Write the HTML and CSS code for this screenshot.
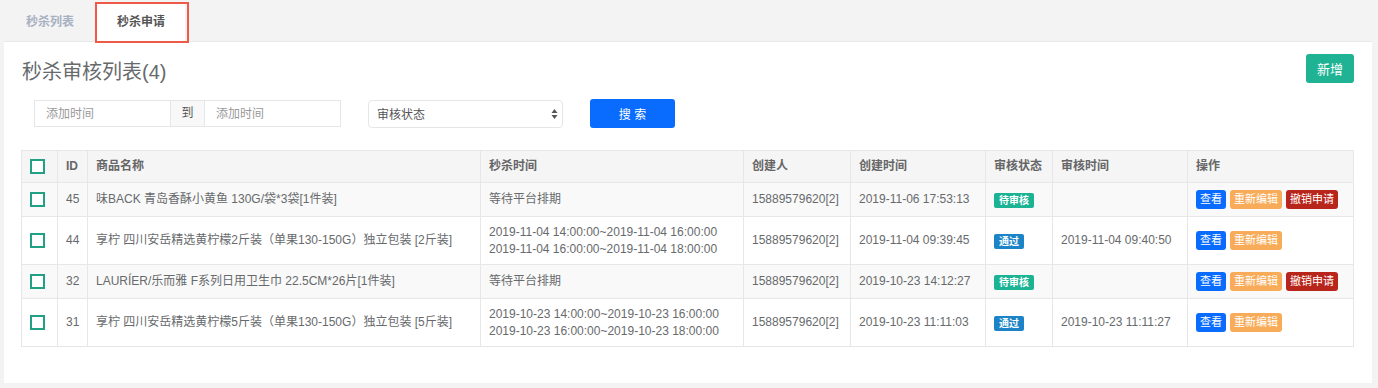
FILE: index.html
```html
<!DOCTYPE html>
<html lang="zh-CN">
<head>
    <meta charset="UTF-8">
    <meta name="viewport" content="width=device-width, initial-scale=1.0">
    <title>秒杀申请</title>
    <link rel="stylesheet" href="styles.css">
</head>
<body>
    <div class="tabs">
        <div class="tab">秒杀列表</div>
        <div class="tab active">秒杀申请</div>
    </div>

    <div class="panel">
        <div class="panel-head">
            <h1 class="title">秒杀审核列表(4)</h1>
            <button class="btn-add">新增</button>
        </div>

        <div class="filters">
            <div class="date-range">
                <input class="input" type="text" placeholder="添加时间">
                <span class="addon">到</span>
                <input class="input" type="text" placeholder="添加时间">
            </div>
            <div class="select">
                <span>审核状态</span>
                <svg width="7" height="12" viewBox="0 0 7 12">
                    <path d="M3.5 1 L6.5 5 L0.5 5 Z" fill="#555"/>
                    <path d="M3.5 11 L6.5 7 L0.5 7 Z" fill="#555"/>
                </svg>
            </div>
            <button class="btn-search">搜 索</button>
        </div>

        <table class="list">
            <colgroup>
                <col style="width: 36px">
                <col style="width: 30px">
                <col style="width: 393px">
                <col style="width: 263px">
                <col style="width: 107px">
                <col style="width: 135px">
                <col style="width: 67px">
                <col style="width: 135px">
                <col>
            </colgroup>
            <thead>
                <tr>
                    <th><span class="check"></span></th>
                    <th>ID</th>
                    <th>商品名称</th>
                    <th>秒杀时间</th>
                    <th>创建人</th>
                    <th>创建时间</th>
                    <th>审核状态</th>
                    <th>审核时间</th>
                    <th>操作</th>
                </tr>
            </thead>
            <tbody>
                <tr>
                    <td><span class="check"></span></td>
                    <td>45</td>
                    <td>味BACK 青岛香酥小黄鱼 130G/袋*3袋[1件装]</td>
                    <td>等待平台排期</td>
                    <td>15889579620[2]</td>
                    <td>2019-11-06 17:53:13</td>
                    <td><span class="badge pending">待审核</span></td>
                    <td></td>
                    <td>
                        <div class="ops">
                            <span class="op view">查看</span>
                            <span class="op edit">重新编辑</span>
                            <span class="op cancel">撤销申请</span>
                        </div>
                    </td>
                </tr>
                <tr>
                    <td><span class="check"></span></td>
                    <td>44</td>
                    <td>享柠 四川安岳精选黄柠檬2斤装（单果130-150G）独立包装 [2斤装]</td>
                    <td>2019-11-04 14:00:00~2019-11-04 16:00:00<br>2019-11-04 16:00:00~2019-11-04 18:00:00</td>
                    <td>15889579620[2]</td>
                    <td>2019-11-04 09:39:45</td>
                    <td><span class="badge passed">通过</span></td>
                    <td>2019-11-04 09:40:50</td>
                    <td>
                        <div class="ops">
                            <span class="op view">查看</span>
                            <span class="op edit">重新编辑</span>
                        </div>
                    </td>
                </tr>
                <tr>
                    <td><span class="check"></span></td>
                    <td>32</td>
                    <td>LAURÍER/乐而雅 F系列日用卫生巾 22.5CM*26片[1件装]</td>
                    <td>等待平台排期</td>
                    <td>15889579620[2]</td>
                    <td>2019-10-23 14:12:27</td>
                    <td><span class="badge pending">待审核</span></td>
                    <td></td>
                    <td>
                        <div class="ops">
                            <span class="op view">查看</span>
                            <span class="op edit">重新编辑</span>
                            <span class="op cancel">撤销申请</span>
                        </div>
                    </td>
                </tr>
                <tr>
                    <td><span class="check"></span></td>
                    <td>31</td>
                    <td>享柠 四川安岳精选黄柠檬5斤装（单果130-150G）独立包装 [5斤装]</td>
                    <td>2019-10-23 14:00:00~2019-10-23 16:00:00<br>2019-10-23 16:00:00~2019-10-23 18:00:00</td>
                    <td>15889579620[2]</td>
                    <td>2019-10-23 11:11:03</td>
                    <td><span class="badge passed">通过</span></td>
                    <td>2019-10-23 11:11:27</td>
                    <td>
                        <div class="ops">
                            <span class="op view">查看</span>
                            <span class="op edit">重新编辑</span>
                        </div>
                    </td>
                </tr>
            </tbody>
        </table>
    </div>
</body>
</html>
```

FILE: styles.css
```css
* {
    margin: 0;
    padding: 0;
    box-sizing: border-box;
}

body {
    font-family: "Liberation Sans", "Noto Sans CJK SC", sans-serif;
    font-size: 12px;
    color: #676a6c;
    background: #f3f3f4;
}

/* tabs */

.tabs {
    display: flex;
    gap: 3px;
    height: 41px;
    padding: 3px 0 0 6px;
}

.tab {
    padding: 0 20px;
    line-height: 38px;
    font-weight: bold;
    color: #a7b1c2;
}

.tab.active {
    position: relative;
    background: #fff;
    color: #555;
}

.tab.active::after {
    content: "";
    position: absolute;
    left: -2px;
    right: -4px;
    top: -1px;
    bottom: -2px;
    border: 2px solid #ee5a45;
}

/* panel */

.panel {
    margin: 0 6px 0 4px;
    padding: 12px 18px 36px 17px;
    background: #fff;
    border-top: 1px solid #e7eaec;
}

.panel-head {
    display: flex;
    justify-content: space-between;
    align-items: flex-start;
}

.title {
    margin: 3px 0 0 1px;
    font-size: 20px;
    line-height: 30px;
    font-weight: normal;
    color: #676a6c;
}

.btn-add {
    height: 29px;
    padding: 0 11px;
    border: none;
    border-radius: 3px;
    background: #1fb394;
    color: #fff;
    font-family: inherit;
    font-size: 13px;
}

/* filters */

.filters {
    display: flex;
    align-items: center;
    margin-top: 12px;
    padding-left: 13px;
    height: 29px;
}

.date-range {
    display: flex;
}

.input {
    width: 137px;
    height: 27px;
    padding: 0 11px;
    border: 1px solid #e5e6e7;
    font-family: inherit;
    font-size: 12px;
    color: #555;
    outline: none;
}

.input::placeholder {
    color: #999;
}

.addon {
    width: 35px;
    height: 27px;
    margin: 0 -1px;
    line-height: 25px;
    text-align: center;
    border: 1px solid #e5e6e7;
    background: #f8f8f8;
    color: #555;
}

.select {
    display: flex;
    justify-content: space-between;
    align-items: center;
    width: 195px;
    height: 28px;
    margin-left: 27px;
    padding: 0 4px 0 8px;
    border: 1px solid #e5e6e7;
    border-radius: 4px;
    color: #555;
}

.btn-search {
    width: 85px;
    height: 29px;
    margin-left: 27px;
    border: none;
    border-radius: 3px;
    background: #0a6cff;
    color: #fff;
    font-family: inherit;
    font-size: 12px;
}

/* table */

.list {
    width: 100%;
    margin-top: 22px;
    border-collapse: collapse;
    table-layout: fixed;
    border: 1px solid #e7e7e7;
}

.list th,
.list td {
    padding: 7px 8px;
    border: 1px solid #e7e7e7;
    line-height: 16.5px;
    text-align: left;
    vertical-align: middle;
    white-space: nowrap;
}

.list th {
    line-height: 16px;
    padding-bottom: 8px;
    background: #f5f5f6;
    font-weight: bold;
    color: #666;
}

.list tbody tr:nth-child(odd) {
    background: #f9f9f9;
}

.check {
    display: block;
    width: 15px;
    height: 15px;
    border: 2px solid #22a085;
    background: #fff;
}

.badge {
    display: inline-block;
    padding: 0 5px;
    line-height: 15px;
    border-radius: 2px;
    font-size: 10px;
    font-weight: bold;
    color: #fff;
    vertical-align: middle;
}

.badge.pending {
    background: #1ab394;
}

.badge.passed {
    background: #1c84c6;
}

.ops {
    display: flex;
    gap: 4px;
    height: 19px;
}

.op {
    padding: 0 4px;
    line-height: 19px;
    border-radius: 3px;
    font-size: 11px;
    color: #fff;
}

.op.view {
    background: #0a6cff;
}

.op.edit {
    background: #f8ac59;
}

.op.cancel {
    background: #b8261b;
}
```
